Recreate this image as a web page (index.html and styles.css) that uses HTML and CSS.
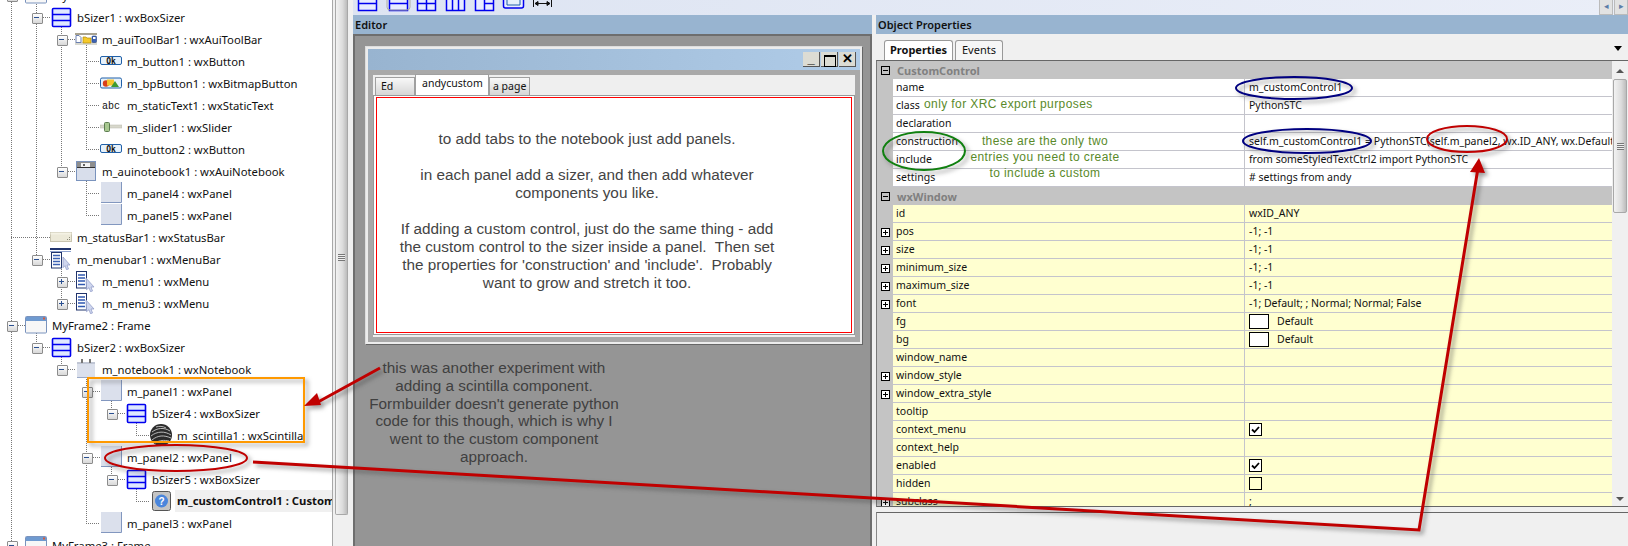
FILE: index.html
```html
<!DOCTYPE html>
<html lang="en">
<head>
    <meta charset="UTF-8">
    <meta name="viewport" content="width=device-width, initial-scale=1.0">
    <title>wxFormBuilder</title>
    <link rel="stylesheet" href="styles.css">
</head>
<body>
    <!-- icons used by the tree -->
    <svg class="defs" width="0" height="0">
        <defs>
            <symbol id="i-sizer" viewBox="0 0 22 22">
                <rect x="2.5" y="2.5" width="18" height="18" rx="1" fill="#dfe8ff" stroke="#0000ee" stroke-width="1.6"/>
                <path d="M2.5 8.5h18M2.5 14.5h18" stroke="#0000ee" stroke-width="1.6"/>
            </symbol>
            <symbol id="i-toolbar" viewBox="0 0 22 22">
                <rect x="0" y="5" width="22" height="2" fill="#a8a290"/>
                <rect x="0" y="14" width="22" height="3" fill="#d8d8d0"/>
                <path d="M1 7.5h3l2 2v5H1z" fill="#fff" stroke="#6a7fb0"/>
                <path d="M8 9h3l1 1h4v5H8z" fill="#f5c92a" stroke="#b08a10" stroke-width=".7"/>
                <rect x="17" y="8" width="4.5" height="6.5" rx="1" fill="#3c62b4" stroke="#20407c" stroke-width=".6"/>
                <rect x="18" y="9" width="2.5" height="2" fill="#fff"/>
            </symbol>
            <symbol id="i-button" viewBox="0 0 22 22">
                <rect x=".5" y="6.5" width="21" height="8" rx="1.5" fill="#e6f1fb" stroke="#2060a8"/>
                <text x="11" y="13.5" text-anchor="middle" class="ok-text">Ok</text>
            </symbol>
            <symbol id="i-bitmap" viewBox="0 0 22 22">
                <rect x=".5" y="6" width="21" height="10" rx="1.5" fill="#e6f1fb" stroke="#2060a8"/>
                <circle cx="6" cy="11.5" r="3.2" fill="#d8401c"/>
                <rect x="7" y="7.5" width="7" height="6" fill="#f6c42c"/>
                <path d="M11 15l4-6 4 6z" fill="#3e9a30"/>
            </symbol>
            <symbol id="i-abc" viewBox="0 0 22 22">
                <text x="11" y="14.5" text-anchor="middle" class="abc-text">abc</text>
            </symbol>
            <symbol id="i-slider" viewBox="0 0 22 22">
                <rect x="0" y="9" width="22" height="3" fill="#d8d8cc" stroke="#b8b8ac" stroke-width=".5"/>
                <rect x="4.5" y="6.5" width="5" height="9" rx="1" fill="#a8c890" stroke="#5c7c50"/>
            </symbol>
            <symbol id="i-auibook" viewBox="0 0 22 22">
                <rect x="1.5" y="1.5" width="19" height="19" fill="#d8deeb" stroke="#7a93bd"/>
                <rect x="2" y="2" width="18" height="5" fill="#8e8e8e"/>
                <rect x="6" y="3" width="9" height="4" fill="#f4f4f4"/>
                <path d="M8 4l2 2M10 4l-2 2" stroke="#222" stroke-width=".7"/>
                <rect x="2" y="7" width="18" height="1" fill="#333"/>
            </symbol>
            <symbol id="i-panel" viewBox="0 0 22 22">
                <rect x="1" y="0" width="20" height="21" fill="#dbe0ec"/>
                <path d="M1 20.5h20.5V0" fill="none" stroke="#8297bf"/>
            </symbol>
            <symbol id="i-status" viewBox="0 0 22 22">
                <rect x=".5" y="6.5" width="21" height="9" fill="#ece9d8" stroke="#c8c4b0"/>
                <rect x=".5" y="6.5" width="21" height="2" fill="#f4f2e4"/>
                <path d="M19 13.5h1M17 13.5h1M19 11.5h1" stroke="#8a8878"/>
            </symbol>
            <symbol id="i-menubar" viewBox="0 0 22 22">
                <rect x="0" y="0" width="21" height="2" fill="#21346c"/>
                <rect x="0" y="3" width="21" height="1" fill="#8fa3cf"/>
                <rect x="1.5" y="4.5" width="10" height="15.5" fill="#fff" stroke="#21346c"/>
                <path d="M3 7.5h7M3 10.5h7M3 13.5h7M3 16.5h7" stroke="#3c62b4" stroke-width="1.4"/>
                <path d="M13 9l7 8h-3l1.5 4-2 .7-1.500-4-2 2z" fill="#cfd6ee" stroke="#8b97c4" stroke-width=".7"/>
            </symbol>
            <symbol id="i-menu" viewBox="0 0 22 22">
                <rect x="1.500" y="1.500" width="10" height="16.500" fill="#fff" stroke="#21346c"/>
                <path d="M3 5h7M3 8h7M3 11h7M3 14.500h7" stroke="#2f57b0" stroke-width="1.400"/>
                <path d="M11 8l8 9h-3l1.500 4-2 .7-1.500-4-2.500 2z" fill="#cfd6ee" stroke="#8b97c4" stroke-width=".7"/>
            </symbol>
            <symbol id="i-frame" viewBox="0 0 22 22">
                <rect x=".5" y="2.500" width="21" height="16.500" rx="1" fill="#f7f7f7" stroke="#7a93bd"/>
                <rect x="1" y="3" width="20" height="4" fill="#6f9ad0"/>
                <rect x="18" y="3.500" width="2" height="2" fill="#d85a3a"/>
            </symbol>
            <symbol id="i-notebook" viewBox="0 0 22 22">
                <rect x="2" y="4" width="18" height="16" fill="#dbe0ec"/>
                <path d="M2 19.500h18" stroke="#9aa9c8"/>
                <rect x="2" y="4" width="18" height="2" fill="#c0c6d4"/>
                <rect x="6" y="1" width="2" height="4" fill="#777"/>
                <rect x="14" y="1" width="2" height="4" fill="#777"/>
            </symbol>
            <symbol id="i-scintilla" viewBox="0 0 22 22">
                <circle cx="11" cy="11" r="11" fill="#2c2c2c"/>
                <path d="M2 8c5-4 12-5 18-1M1 12c6-5 14-5 20-1M2 16c6-5 12-5 19-2M5 19c5-3 9-3 14-2M6 3c3-1 7-1 10 1" fill="none" stroke="#c8c8c8" stroke-width=".9"/>
            </symbol>
            <symbol id="i-custom" viewBox="0 0 22 22">
                <rect x="2.500" y="1.500" width="18" height="19" rx="2" fill="#c4c4c4" stroke="#555"/>
                <circle cx="11.500" cy="11" r="6.500" fill="#4a86dc"/>
                <text x="11.500" y="14.500" text-anchor="middle" class="help-text">?</text>
            </symbol>
            <symbol id="i-check" viewBox="0 0 13 13">
                <rect x=".5" y=".5" width="12" height="12" fill="#fff" stroke="#000"/>
                <path d="M3 6.500l2.500 2.500 4.500-5" fill="none" stroke="#000" stroke-width="1.800"/>
            </symbol>
        </defs>
    </svg>

    <div class="app">
        <!-- object tree -->
        <div class="tree">
            <div class="tree-rows">
                <div class="row d0"><span class="toggle minus"></span><svg class="icon"><use href="#i-frame"/></svg><span class="label">MyFrame1 : Frame</span></div>
                <div class="row d1"><span class="toggle minus"></span><svg class="icon"><use href="#i-sizer"/></svg><span class="label">bSizer1 : wxBoxSizer</span></div>
                <div class="row d2"><span class="toggle minus"></span><svg class="icon"><use href="#i-toolbar"/></svg><span class="label">m_auiToolBar1 : wxAuiToolBar</span></div>
                <div class="row d3"><span class="toggle"></span><svg class="icon"><use href="#i-button"/></svg><span class="label">m_button1 : wxButton</span></div>
                <div class="row d3"><span class="toggle"></span><svg class="icon"><use href="#i-bitmap"/></svg><span class="label">m_bpButton1 : wxBitmapButton</span></div>
                <div class="row d3"><span class="toggle"></span><svg class="icon"><use href="#i-abc"/></svg><span class="label">m_staticText1 : wxStaticText</span></div>
                <div class="row d3"><span class="toggle"></span><svg class="icon"><use href="#i-slider"/></svg><span class="label">m_slider1 : wxSlider</span></div>
                <div class="row d3"><span class="toggle"></span><svg class="icon"><use href="#i-button"/></svg><span class="label">m_button2 : wxButton</span></div>
                <div class="row d2"><span class="toggle minus"></span><svg class="icon"><use href="#i-auibook"/></svg><span class="label">m_auinotebook1 : wxAuiNotebook</span></div>
                <div class="row d3"><span class="toggle"></span><svg class="icon"><use href="#i-panel"/></svg><span class="label">m_panel4 : wxPanel</span></div>
                <div class="row d3"><span class="toggle"></span><svg class="icon"><use href="#i-panel"/></svg><span class="label">m_panel5 : wxPanel</span></div>
                <div class="row d1"><span class="toggle"></span><svg class="icon"><use href="#i-status"/></svg><span class="label">m_statusBar1 : wxStatusBar</span></div>
                <div class="row d1"><span class="toggle minus"></span><svg class="icon"><use href="#i-menubar"/></svg><span class="label">m_menubar1 : wxMenuBar</span></div>
                <div class="row d2"><span class="toggle plus"></span><svg class="icon"><use href="#i-menu"/></svg><span class="label">m_menu1 : wxMenu</span></div>
                <div class="row d2"><span class="toggle plus"></span><svg class="icon"><use href="#i-menu"/></svg><span class="label">m_menu3 : wxMenu</span></div>
                <div class="row d0"><span class="toggle minus"></span><svg class="icon"><use href="#i-frame"/></svg><span class="label">MyFrame2 : Frame</span></div>
                <div class="row d1"><span class="toggle minus"></span><svg class="icon"><use href="#i-sizer"/></svg><span class="label">bSizer2 : wxBoxSizer</span></div>
                <div class="row d2"><span class="toggle minus"></span><svg class="icon"><use href="#i-notebook"/></svg><span class="label">m_notebook1 : wxNotebook</span></div>
                <div class="row d3"><span class="toggle minus"></span><svg class="icon"><use href="#i-panel"/></svg><span class="label">m_panel1 : wxPanel</span></div>
                <div class="row d4"><span class="toggle minus"></span><svg class="icon"><use href="#i-sizer"/></svg><span class="label">bSizer4 : wxBoxSizer</span></div>
                <div class="row d5"><span class="toggle"></span><svg class="icon"><use href="#i-scintilla"/></svg><span class="label">m_scintilla1 : wxScintilla</span></div>
                <div class="row d3"><span class="toggle minus"></span><svg class="icon"><use href="#i-panel"/></svg><span class="label">m_panel2 : wxPanel</span></div>
                <div class="row d4"><span class="toggle minus"></span><svg class="icon"><use href="#i-sizer"/></svg><span class="label">bSizer5 : wxBoxSizer</span></div>
                <div class="row d5 selected"><span class="toggle"></span><svg class="icon"><use href="#i-custom"/></svg><span class="label">m_customControl1 : CustomControl</span></div>
                <div class="row d3"><span class="toggle"></span><svg class="icon"><use href="#i-panel"/></svg><span class="label">m_panel3 : wxPanel</span></div>
                <div class="row d0"><span class="toggle minus"></span><svg class="icon"><use href="#i-frame"/></svg><span class="label">MyFrame3 : Frame</span></div>
            </div>
            <!-- dotted connectors -->
            <svg class="tree-lines" width="332" height="546">
                <path d="M11.500 0V546 M36.500 0V259 M61.500 17V171 M86.500 39V149 M86.500 171V215 M61.500 259V303 M36.500 325V347 M61.500 347V369 M86.500 369V523 M111.500 391V413 M136.500 413V435 M111.500 457V479 M136.500 479V501
                         M41 17.500H50 M66 39.500H75 M86 61.500H100 M86 83.500H100 M86 105.500H100 M86 127.500H100 M86 149.500H100 M66 171.500H75 M86 193.500H100 M86 215.500H100 M11 237.500H50 M41 259.500H50 M66 281.500H75 M66 303.500H75
                         M16 325.500H25 M41 347.500H50 M66 369.500H75 M91 391.500H100 M116 413.500H125 M136 435.500H150 M91 457.500H100 M116 479.500H125 M136 501.500H150 M86 523.500H100" />
            </svg>
        </div>
        <div class="tree-scroll"><div class="thumb"><span class="grip"></span></div></div>
        <div class="sash"></div>

        <div class="workspace">
            <div class="palette">
                <svg class="palette-icons" width="200" height="15" viewBox="0 0 200 15">
                    <g fill="#e8ecff" stroke="#0000ee" stroke-width="1.500">
                        <path d="M5.500-6h18V10.500h-18zM5.500 3.500h18"/>
                        <path d="M36.500-6h18V10.500h-18zM36.500 3.500h18"/>
                        <path d="M64.500-6h18V10.500h-18zM73.500-6V10.500M64.500 3.500h18"/>
                        <path d="M93.500-6h18V10.500h-18zM99.500-6V10.500M105.500-6V10.500"/>
                        <path d="M122.500-6h18V10.500h-18zM131.500-6V10.500M131.500 3.500h9"/>
                        <rect x="150.500" y="-6" width="20" height="14" rx="2"/>
                    </g>
                    <path d="M34-6v13a3 3 0 0 0 3 3h17a3 3 0 0 0 3-3V-6" fill="none" stroke="#b0b0a0"/>
                    <path d="M154 -2h13v7h-13z" fill="#e6f1fb" stroke="#2060a8"/>
                    <path d="M180.500 0v7M198.500 0v7M182 3.500h15M182 3.500l3-2v4zM197 3.500l-3-2v4z" fill="#111" stroke="#111"/>
                </svg>
                <div class="spin">
                    <span class="spin-btn">&#9666;</span>
                    <span class="spin-btn">&#9656;</span>
                </div>
            </div>
            <div class="panes">
                <div class="editor">
                    <div class="caption">Editor</div>
                    <div class="canvas">
                        <div class="frame">
                            <div class="frame-title">
                                <span class="win-btn">_</span>
                                <span class="win-btn box"></span>
                                <span class="win-btn">&#10005;</span>
                            </div>
                            <div class="frame-body">
                                <div class="notebook">
                                    <div class="nb-tabs">
                                        <span class="nb-tab nb-first">Ed</span>
                                        <span class="nb-tab active">andycustom</span>
                                        <span class="nb-tab nb-last">a page</span>
                                    </div>
                                    <div class="nb-page">
                                        <div class="nb-inner">
                                            <p>to add tabs to the notebook just add panels.</p>
                                            <p>in each panel add a sizer, and then add whatever<br>components you like.</p>
                                            <p>If adding a custom control, just do the same thing - add<br>the custom control to the sizer inside a panel.&nbsp; Then set<br>the properties for 'construction' and 'include'.&nbsp; Probably<br>want to grow and stretch it too.</p>
                                        </div>
                                    </div>
                                </div>
                            </div>
                        </div>
                    </div>
                </div>

                <div class="props">
                    <div class="caption">Object Properties</div>
                    <div class="prop-tabs">
                        <span class="prop-tab active">Properties</span>
                        <span class="prop-tab">Events</span>
                        <span class="tab-menu"></span>
                    </div>
                    <div class="grid-wrap">
                        <div class="grid">
                            <div class="cat"><span class="gut"><i class="exp minus"></i></span><span>CustomControl</span></div>
                            <div class="prop plain"><span class="gut"></span><span class="name">name</span><span class="value">m_customControl1</span></div>
                            <div class="prop plain"><span class="gut"></span><span class="name">class</span><span class="value">PythonSTC</span></div>
                            <div class="prop plain"><span class="gut"></span><span class="name">declaration</span><span class="value"></span></div>
                            <div class="prop plain"><span class="gut"></span><span class="name">construction</span><span class="value">self.m_customControl1 = PythonSTC(self.m_panel2, wx.ID_ANY, wx.DefaultPosition</span></div>
                            <div class="prop plain"><span class="gut"></span><span class="name">include</span><span class="value">from someStyledTextCtrl2 import PythonSTC</span></div>
                            <div class="prop plain"><span class="gut"></span><span class="name">settings</span><span class="value"># settings from andy</span></div>
                            <div class="cat"><span class="gut"><i class="exp minus"></i></span><span>wxWindow</span></div>
                            <div class="prop"><span class="gut"></span><span class="name">id</span><span class="value">wxID_ANY</span></div>
                            <div class="prop"><span class="gut"><i class="exp"></i></span><span class="name">pos</span><span class="value">-1; -1</span></div>
                            <div class="prop"><span class="gut"><i class="exp"></i></span><span class="name">size</span><span class="value">-1; -1</span></div>
                            <div class="prop"><span class="gut"><i class="exp"></i></span><span class="name">minimum_size</span><span class="value">-1; -1</span></div>
                            <div class="prop"><span class="gut"><i class="exp"></i></span><span class="name">maximum_size</span><span class="value">-1; -1</span></div>
                            <div class="prop"><span class="gut"><i class="exp"></i></span><span class="name">font</span><span class="value">-1; Default; ; Normal; Normal; False</span></div>
                            <div class="prop"><span class="gut"></span><span class="name">fg</span><span class="value"><i class="swatch"></i>Default</span></div>
                            <div class="prop"><span class="gut"></span><span class="name">bg</span><span class="value"><i class="swatch"></i>Default</span></div>
                            <div class="prop"><span class="gut"></span><span class="name">window_name</span><span class="value"></span></div>
                            <div class="prop"><span class="gut"><i class="exp"></i></span><span class="name">window_style</span><span class="value"></span></div>
                            <div class="prop"><span class="gut"><i class="exp"></i></span><span class="name">window_extra_style</span><span class="value"></span></div>
                            <div class="prop"><span class="gut"></span><span class="name">tooltip</span><span class="value"></span></div>
                            <div class="prop"><span class="gut"></span><span class="name">context_menu</span><span class="value"><svg class="check"><use href="#i-check"/></svg></span></div>
                            <div class="prop"><span class="gut"></span><span class="name">context_help</span><span class="value"></span></div>
                            <div class="prop"><span class="gut"></span><span class="name">enabled</span><span class="value"><svg class="check"><use href="#i-check"/></svg></span></div>
                            <div class="prop"><span class="gut"></span><span class="name">hidden</span><span class="value"><i class="unchecked"></i></span></div>
                            <div class="prop"><span class="gut"><i class="exp"></i></span><span class="name">subclass</span><span class="value">;</span></div>
                        </div>
                        <div class="grid-scroll">
                            <span class="arrow up"></span>
                            <div class="grid-thumb"><span class="grip"></span></div>
                            <span class="arrow down"></span>
                        </div>
                    </div>
                    <div class="desc"></div>
                </div>
            </div>
        </div>

        <!-- hand drawn notes on top of the screenshot -->
        <svg class="ink" width="1628" height="546">
            <g class="ink-shadow">
                <rect x="88" y="378" width="216" height="64" fill="none" stroke="#ff9900" stroke-width="2"/>
                <ellipse cx="176" cy="458" rx="71" ry="13" fill="none" stroke="#c00000" stroke-width="2"/>
                <ellipse cx="1294" cy="88" rx="58" ry="11" fill="none" stroke="#000080" stroke-width="2"/>
                <ellipse cx="1307" cy="141" rx="64" ry="12" fill="none" stroke="#000080" stroke-width="2"/>
                <ellipse cx="1467" cy="139" rx="40" ry="13" fill="none" stroke="#c00000" stroke-width="2"/>
                <ellipse cx="924" cy="151" rx="41" ry="19" fill="none" stroke="#108010" stroke-width="2"/>
                <path d="M380 368L318 402" fill="none" stroke="#c00000" stroke-width="3"/>
                <path d="M304 406L317 393L321 405z" fill="#c00000"/>
                <path d="M253 462L1419 530L1478 168" fill="none" stroke="#c00000" stroke-width="3"/>
                <path d="M1479 158L1470 172L1485 173z" fill="#c00000"/>
            </g>
        </svg>
        <div class="note note-xrc">only for XRC export purposes</div>
        <div class="note note-two">these are the only two<br>entries you need to create<br>to include a custom</div>
        <div class="remark">this was another experiment with<br>adding a scintilla component.<br>Formbuilder doesn't generate python<br>code for this though, which is why I<br>went to the custom component<br>approach.</div>
    </div>
</body>
</html>
```
FILE: styles.css
```css
* {
    box-sizing: border-box;
}
html, body {
    margin: 0;
    padding: 0;
}
body {
    background-color: #f0f0f0;
    color: #111;
    font-family: "Noto Sans", "Liberation Sans", sans-serif;
    font-size: 11px;
    overflow: hidden;
}
.defs {
    position: absolute;
}
.ok-text {
    font: bold 8px "DejaVu Sans Mono", monospace;
    fill: #111;
}
.abc-text {
    font: 10px "Liberation Mono", monospace;
    fill: #111;
}
.help-text {
    font: bold 10px "Liberation Sans", sans-serif;
    fill: #fff;
}
.app {
    position: relative;
    display: flex;
    width: 1628px;
    height: 546px;
    overflow: hidden;
}

/* tree */
.tree {
    position: relative;
    width: 333px;
    flex: none;
    background-color: #fff;
    border-right: 1px solid #a8a8a8;
    overflow: hidden;
}
.tree-rows {
    position: relative;
    z-index: 1;
    margin-top: -16px;
    font-size: 11.3px;
}
.tree-lines {
    position: absolute;
    left: 0;
    top: 0;
}
.tree-lines path {
    fill: none;
    stroke: #777;
    stroke-width: 1;
    stroke-dasharray: 1 1;
}
.row {
    display: flex;
    align-items: center;
    height: 22px;
    white-space: nowrap;
}
.d1 { padding-left: 25px; }
.d2 { padding-left: 50px; }
.d3 { padding-left: 75px; }
.d4 { padding-left: 100px; }
.d5 { padding-left: 125px; }
.toggle {
    position: relative;
    flex: none;
    width: 25px;
    height: 9px;
}
.toggle.minus::before,
.toggle.plus::before {
    content: "";
    position: absolute;
    left: 7px;
    top: 0;
    width: 9px;
    height: 9px;
    border: 1px solid #8c8c8c;
    border-radius: 1px;
    background: linear-gradient(#fff, #d8d8d8);
}
.toggle.minus::after,
.toggle.plus::after {
    content: "";
    position: absolute;
    left: 9px;
    top: 4px;
    width: 5px;
    height: 1px;
    background-color: #2a4f90;
}
.toggle.plus {
    background: linear-gradient(#2a4f90, #2a4f90) 11px 2px / 1px 5px no-repeat;
}
.toggle.plus::before {
    z-index: -1;
}
.icon {
    flex: none;
    width: 22px;
    height: 22px;
    margin-right: 5px;
}
.label {
    flex: none;
}
.selected .label {
    flex: 1;
    font-weight: bold;
    background-color: #f0f0f0;
    line-height: 22px;
    margin-left: -2px;
    padding-left: 2px;
    overflow: hidden;
}

/* scrollbar and sash next to the tree */
.tree-scroll {
    width: 16px;
    flex: none;
    background-color: #f0f0f0;
}
.thumb {
    display: flex;
    align-items: center;
    justify-content: center;
    width: 13px;
    height: 515px;
    margin-left: 2px;
    background: linear-gradient(to right, #f2f2f2, #dcdcdc 60%, #bcbcbc);
    border: 1px solid #a8a8a8;
    border-top: none;
    border-radius: 0 0 2px 2px;
}
.grip {
    width: 7px;
    height: 7px;
    background: repeating-linear-gradient(#777 0, #777 1px, #eee 1px, #eee 2px);
}
.sash {
    width: 4px;
    flex: none;
}

/* right part */
.workspace {
    flex: 1;
    display: flex;
    flex-direction: column;
    min-width: 0;
}
.palette {
    display: flex;
    justify-content: space-between;
    height: 15px;
    flex: none;
    background: linear-gradient(to right, #dde4f2, #eaeef8);
    overflow: hidden;
}
.spin {
    display: flex;
    gap: 1px;
}
.spin-btn {
    width: 14px;
    font-size: 9px;
    line-height: 12px;
    text-align: center;
    color: #5c7ea8;
    background-color: #e2e2e2;
    border: 1px solid #bbb;
    border-top: none;
}
.panes {
    flex: 1;
    display: flex;
    gap: 4px;
    min-height: 0;
}
.editor {
    display: flex;
    flex-direction: column;
    width: 519px;
    flex: none;
}
.caption {
    flex: none;
    height: 19px;
    padding-left: 2px;
    line-height: 19px;
    font-size: 11px;
    font-weight: 600;
    background-color: #98b4d0;
}
.canvas {
    flex: 1;
    background-color: #959595;
    border-top: 2px solid #6e6e6e;
    border-left: 2px solid #6e6e6e;
    border-right: 2px solid #6e6e6e;
    padding: 10px 0 0 10px;
}
.frame {
    display: flex;
    flex-direction: column;
    width: 498px;
    height: 299px;
    padding: 2px;
    background-color: #ececec;
    border-right: 1px solid #666;
    border-bottom: 1px solid #666;
    border-top: 1px solid #ddd;
    border-left: 1px solid #ddd;
}
.frame-title {
    display: flex;
    align-items: center;
    justify-content: flex-end;
    gap: 1px;
    height: 21px;
    flex: none;
    padding-right: 4px;
    background: linear-gradient(to right, #98b4d0, #b0cce8);
}
.win-btn {
    width: 17px;
    height: 15px;
    font: bold 13px/14px "Liberation Sans", sans-serif;
    text-align: center;
    color: #000;
    background-color: #dcdcd4;
    border-right: 1px solid #555;
    border-bottom: 1px solid #555;
}
.win-btn.box {
    position: relative;
}
.win-btn.box::after {
    content: "";
    position: absolute;
    left: 3px;
    top: 3px;
    width: 10px;
    height: 9px;
    border: 1px solid #000;
    border-top-width: 2px;
}
.frame-body {
    flex: 1;
    padding: 5px;
    background-color: #a9a9a9;
}
.notebook {
    display: flex;
    flex-direction: column;
    height: 100%;
    background-color: #efefef;
    padding-bottom: 2px;
}
.nb-tabs {
    display: flex;
    align-items: flex-end;
    height: 20px;
    flex: none;
    padding-left: 2px;
}
.nb-tab {
    height: 18px;
    padding-left: 5px;
    line-height: 17px;
    font-size: 10.500px;
    background: linear-gradient(#f8f8f8, #d6d6d6);
    border: 1px solid #a0a0a0;
    border-bottom: none;
}
.nb-first {
    width: 40px;
}
.nb-last {
    width: 41px;
    padding-left: 3px;
}
.nb-tab.active {
    width: 74px;
    height: 21px;
    padding-left: 6px;
    background: #fff;
    line-height: 17px;
}
.nb-page {
    flex: 1;
    padding: 1px 2px;
    border: 1px solid #999;
    background-color: #fff;
}
.nb-inner {
    height: 100%;
    padding: 32px 54px 0 0;
    border: 1px solid #f00;
    font-family: "Liberation Sans", sans-serif;
    font-size: 15.300px;
    line-height: 18px;
    text-align: center;
    color: #444;
}
.nb-inner p {
    margin: 0 0 18px;
}

/* properties */
.props {
    flex: 1;
    display: flex;
    flex-direction: column;
    min-width: 0;
}
.prop-tabs {
    position: relative;
    display: flex;
    align-items: flex-end;
    gap: 2px;
    height: 26px;
    flex: none;
    padding-left: 8px;
    background-color: #f0f0f0;
}
.prop-tab {
    height: 20px;
    padding: 0 6px;
    line-height: 18px;
    font-size: 11px;
    background-color: #f6f6f6;
    border: 1px solid #999;
    border-bottom: none;
    border-radius: 3px 3px 0 0;
}
.prop-tab.active {
    padding: 0 5px;
    font-weight: bold;
    background-color: #fff;
}
.tab-menu {
    position: absolute;
    right: 6px;
    top: 12px;
    border-top: 5px solid #000;
    border-left: 4px solid transparent;
    border-right: 4px solid transparent;
}
.grid-wrap {
    display: flex;
    height: 447px;
    flex: none;
    border-top: 1px solid #666;
    border-bottom: 1px solid #666;
    border-left: 1px solid #777;
    overflow: hidden;
}
.grid {
    flex: 1;
    min-width: 0;
    overflow: hidden;
}
.cat {
    display: flex;
    align-items: center;
    height: 18px;
    font-weight: bold;
    color: #808080;
    background-color: #c4c4c4;
}
.prop {
    display: flex;
    height: 18px;
    font-size: 10.500px;
    line-height: 17px;
    white-space: nowrap;
}
.gut {
    display: flex;
    align-items: center;
    justify-content: center;
    width: 16px;
    flex: none;
    height: 18px;
    background-color: #c4c4c4;
}
.cat .gut {
    margin-right: 4px;
}
.name {
    width: 352px;
    flex: none;
    padding-left: 3px;
    background-color: #ffffd0;
    border-bottom: 1px solid #c4c4cc;
    border-right: 1px solid #c4c4cc;
}
.value {
    display: flex;
    align-items: center;
    flex: 1;
    min-width: 0;
    padding-left: 4px;
    background-color: #ffffd0;
    border-bottom: 1px solid #c4c4cc;
    overflow: hidden;
}
.plain .name,
.plain .value {
    background-color: #fff;
}
.exp {
    position: relative;
    display: block;
    width: 9px;
    height: 9px;
    border: 1px solid #000;
    background: linear-gradient(#000, #000) center / 5px 1px no-repeat, linear-gradient(#000, #000) center / 1px 5px no-repeat, #fff;
}
.exp.minus {
    background: linear-gradient(#000, #000) center / 5px 1px no-repeat, #c4c4c4;
}
.swatch {
    width: 20px;
    height: 15px;
    flex: none;
    margin-right: 8px;
    background-color: #fff;
    border: 1px solid #000;
}
.check {
    width: 13px;
    height: 13px;
}
.unchecked {
    width: 13px;
    height: 13px;
    border: 1px solid #000;
}
.grid-scroll {
    display: flex;
    flex-direction: column;
    align-items: center;
    position: relative;
    width: 16px;
    flex: none;
    background-color: #f0f0f0;
}
.arrow {
    position: absolute;
    left: 4px;
    border-left: 4px solid transparent;
    border-right: 4px solid transparent;
}
.arrow.up {
    top: 8px;
    border-bottom: 4px solid #555;
}
.arrow.down {
    bottom: 5px;
    border-top: 4px solid #555;
}
.grid-thumb {
    display: flex;
    align-items: center;
    justify-content: center;
    width: 14px;
    height: 134px;
    margin-top: 18px;
    background: linear-gradient(to right, #f2f2f2, #dcdcdc 60%, #bcbcbc);
    border: 1px solid #a8a8a8;
    border-radius: 2px;
}
.desc {
    flex: 1;
    margin-top: 5px;
    background-color: #f0f0f0;
    border-top: 1px solid #666;
    border-left: 1px solid #888;
}

/* hand drawn notes */
.ink {
    position: absolute;
    left: 0;
    top: 0;
    z-index: 2;
    pointer-events: none;
}
.ink-shadow {
    filter: drop-shadow(3px 3px 2px rgba(60, 60, 60, 0.5));
}
.note {
    position: absolute;
    z-index: 3;
    font-family: "Liberation Sans", sans-serif;
    font-size: 12px;
    letter-spacing: 0.4px;
    color: #5a8a2a;
    text-align: center;
    white-space: nowrap;
}
.note-xrc {
    left: 924px;
    top: 97px;
}
.note-two {
    left: 960px;
    top: 133px;
    width: 170px;
    line-height: 16px;
}
.remark {
    position: absolute;
    z-index: 3;
    left: 368px;
    top: 359px;
    width: 252px;
    font-family: "Liberation Sans", sans-serif;
    font-size: 15.300px;
    line-height: 17.8px;
    text-align: center;
    white-space: nowrap;
    color: #404040;
}
```
